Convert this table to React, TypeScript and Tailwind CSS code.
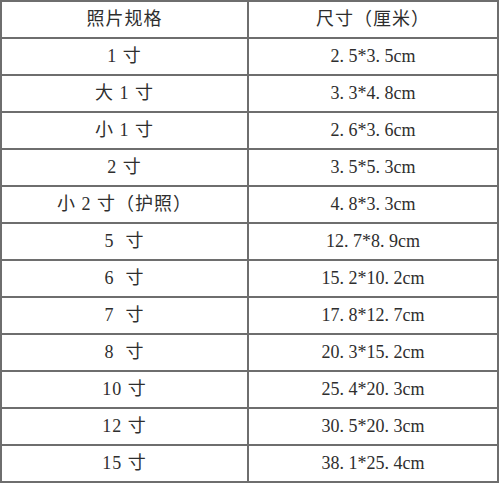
import React from "react";

const rows: [string, string][] = [
  ["照片规格", "尺寸（厘米）"],
  ["1 寸", "2. 5*3. 5cm"],
  ["大 1 寸", "3. 3*4. 8cm"],
  ["小 1 寸", "2. 6*3. 6cm"],
  ["2 寸", "3. 5*5. 3cm"],
  ["小 2 寸（护照）", "4. 8*3. 3cm"],
  ["5  寸", "12. 7*8. 9cm"],
  ["6  寸", "15. 2*10. 2cm"],
  ["7  寸", "17. 8*12. 7cm"],
  ["8  寸", "20. 3*15. 2cm"],
  ["10 寸", "25. 4*20. 3cm"],
  ["12 寸", "30. 5*20. 3cm"],
  ["15 寸", "38. 1*25. 4cm"],
];

export default function App() {
  return (
    <div
      className="w-[500px] h-[484px] bg-white text-[#2e2e2e]"
      style={{ fontFamily: '"Liberation Serif", "Noto Sans CJK SC", serif' }}
    >
      <div className="w-[499px] border-t-2 border-l-2 border-r-2 border-[#6e6e6e]">
        {rows.map(([a, b], i) => (
          <div key={i} className="grid grid-cols-[247px_1fr] h-[37px] border-b-2 border-[#6e6e6e]">
            <div className="flex items-center justify-center border-r-2 border-[#6e6e6e] text-[18px] tracking-[1px] whitespace-pre">
              {a}
            </div>
            <div
              className={
                i === 0
                  ? "flex items-center justify-center text-[18px] tracking-[1px] whitespace-pre"
                  : "flex items-center justify-center text-[18px] whitespace-pre"
              }
            >
              {b}
            </div>
          </div>
        ))}
      </div>
    </div>
  );
}
